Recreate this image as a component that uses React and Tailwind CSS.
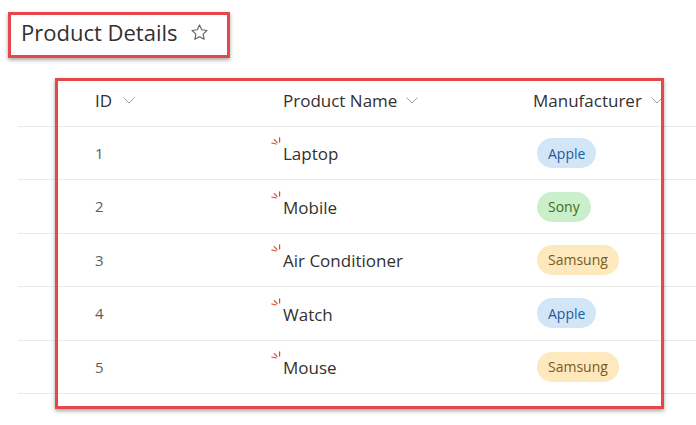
const ROWS = [
  { id: 1, name: "Laptop", maker: "Apple" },
  { id: 2, name: "Mobile", maker: "Sony" },
  { id: 3, name: "Air Conditioner", maker: "Samsung" },
  { id: 4, name: "Watch", maker: "Apple" },
  { id: 5, name: "Mouse", maker: "Samsung" },
];

const BADGE = {
  Apple: "bg-[#d3e6f8] text-[#1e5c99]",
  Sony: "bg-[#caefcb] text-[#3f6e17]",
  Samsung: "bg-[#fde9bd] text-[#7a5a1c]",
};

function Chevron() {
  return (
    <svg width="12" height="7" viewBox="0 0 12 7" fill="none" stroke="#a19f9d" strokeWidth="1">
      <path d="M0.5 0.5L6 6L11.5 0.5" />
    </svg>
  );
}

function NewIcon() {
  return (
    <svg width="12" height="12" viewBox="0 0 12 12" fill="none" stroke="#cf4f2a" strokeWidth="1.2" strokeLinecap="round">
      <path d="M0.8 6L5.2 7" />
      <path d="M3.2 2.6L6.2 5.6" />
      <path d="M8.6 0.8L8.6 5" />
    </svg>
  );
}

export default function App() {
  return (
    <div className="relative w-[696px] h-[425px] bg-white overflow-hidden text-[#323130]" style={{ fontFamily: '"Open Sans", "Noto Sans", sans-serif' }}>
      {/* Title */}
      <div className="pt-[12px] pl-[8px]">
        <div className="w-[222px] h-[46px] border-[3px] border-[#e5474d] shadow-[0_2px_4px_rgba(0,0,0,0.35)] flex items-center pl-[10px] pb-[6px] gap-[13px]">
          <span className="text-[22px] leading-none text-[#323130]">Product Details</span>
          <svg width="19" height="19" viewBox="0 0 24 24" fill="none" stroke="#605e5c" strokeWidth="1.4" strokeLinejoin="round">
            <path d="M12 2.5l2.9 6.1 6.6.8-4.9 4.6 1.3 6.6L12 17.3l-5.9 3.3 1.3-6.6-4.9-4.6 6.6-.8z" />
          </svg>
        </div>
      </div>

      {/* List */}
      <div className="mt-[17px] ml-[18px]">
        <div className="h-[52px] flex items-center border-b border-[#edebe9]">
          <div className="w-[265px] pl-[77px] flex items-center gap-[11px] text-[17px]">
            ID <Chevron />
          </div>
          <div className="w-[250px] flex items-center gap-[9px] text-[17px]">
            Product Name <Chevron />
          </div>
          <div className="flex items-center gap-[9px] text-[17px]">
            Manufacturer <Chevron />
          </div>
        </div>
        {ROWS.map((r) => (
          <div key={r.id} className="h-[53.4px] flex items-center border-b border-[#edebe9]">
            <div className="w-[265px] pl-[77px] text-[15px] text-[#605e5c]">{r.id}</div>
            <div className="w-[250px] relative text-[17px] pt-[2px]">
              <span className="absolute left-[-12px] top-[-2px]">
                <NewIcon />
              </span>
              {r.name}
            </div>
            <div className="pl-[4px]">
              <span className={`inline-flex items-center h-[30px] px-[11px] rounded-full text-[14px] ${BADGE[r.maker]}`}>
                {r.maker}
              </span>
            </div>
          </div>
        ))}
      </div>

      {/* annotation frame over the table */}
      <div className="absolute left-[55px] top-[78px] w-[609px] h-[331px] border-[3px] border-[#e5474d] shadow-[0_2px_4px_rgba(0,0,0,0.35)] pointer-events-none" />
    </div>
  );
}
